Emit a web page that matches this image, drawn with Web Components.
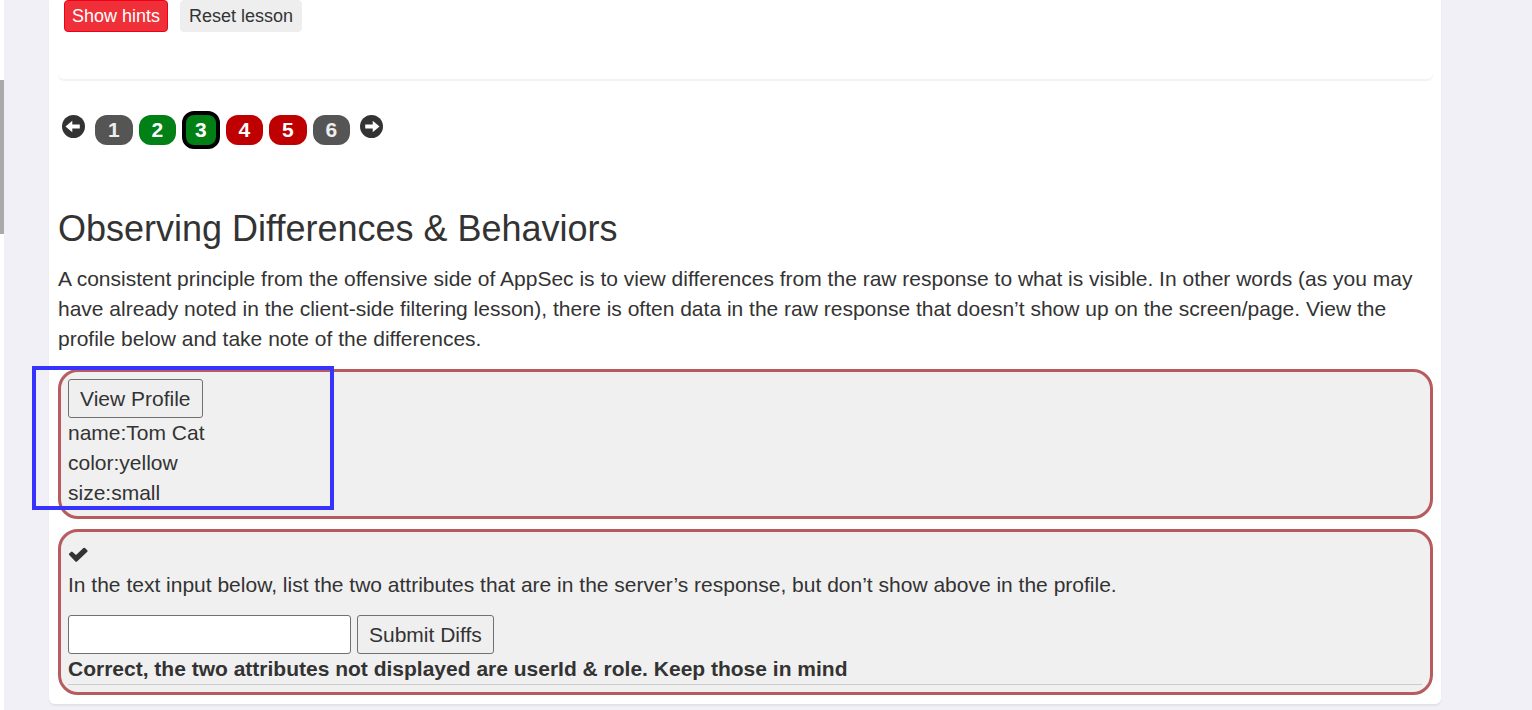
<!DOCTYPE html>
<html lang="en">
<head>
<meta charset="utf-8">
<title>Observing Differences &amp; Behaviors</title>
<style>
  body { margin: 0; background: #f1f0f7; color: #333; font: 21px/30px "Liberation Sans", Arial, sans-serif; }
</style>
</head>
<body>
<lesson-app></lesson-app>

<template id="app">
  <style>
    :host { display: flex; align-items: flex-start; min-height: 100vh; }
    .rail { flex: 0 0 4px; align-self: stretch; background: #fff; padding-top: 80px; box-sizing: border-box; }
    .thumb { height: 154px; background: #aaa; }
    main { flex: 1; min-width: 0; box-sizing: border-box; margin: 0 91px 0 45px; padding: 0 8px 9px 9px; background: #fff; border-radius: 0 0 6px 6px; box-shadow: 0 2px 2px rgba(0,0,0,.06); }
    lesson-pager { margin: 32px 0 60px 4px; }
    h1 { margin: 0 0 15px; font-size: 36px; line-height: 40px; font-weight: 400; }
    p { margin: 0 0 15px; }
    attack-box + attack-box { margin-top: 10px; }
    .lines { margin: 0; }
    .status { display: flex; align-items: center; height: 31px; }
    .status svg { display: block; width: 20px; height: 15px; }
    form { display: flex; gap: 6px; }
    input { box-sizing: border-box; width: 283px; height: 39px; padding: 0 8px; border: 1px solid #707070; border-radius: 3px; background: #fff; font: inherit; color: inherit; }
    .feedback { font-weight: 700; border-bottom: 1px solid #ccc; margin-right: 1px; }
  </style>
  <div class="rail"><div class="thumb"></div></div>
  <main>
    <lesson-toolbar></lesson-toolbar>
    <lesson-pager></lesson-pager>
    <h1>Observing Differences &amp; Behaviors</h1>
    <p>A consistent principle from the offensive side of AppSec is to view differences from the raw response to what is visible. In other words (as you may have already noted in the client-side filtering lesson), there is often data in the raw response that doesn’t show up on the screen/page. View the profile below and take note of the differences.</p>
    <attack-box marked>
      <form-button>View Profile</form-button>
      <div class="lines">name:Tom Cat<br>color:yellow<br>size:small</div>
    </attack-box>
    <attack-box>
      <div class="status"><svg viewBox="0 0 20 15" role="img" aria-label="Solved"><path d="M1.2 8Q.6 7.3 1.2 6.6L3 4.9Q3.8 4.2 4.6 4.9L8 8 15.4 1.1Q16.2.4 17 1.1L19.3 3.3Q20 4 19.3 4.8L9 14.4Q8.2 15 7.4 14.4Z" fill="#333"/></svg></div>
      <p><label for="diffs">In the text input below, list the two attributes that are in the server’s response, but don’t show above in the profile.</label></p>
      <form onsubmit="return false"><input id="diffs" type="text"><form-button>Submit Diffs</form-button></form>
      <div class="feedback">Correct, the two attributes not displayed are userId &amp; role. Keep those in mind</div>
    </attack-box>
  </main>
</template>

<template id="toolbar">
  <style>
    :host { display: flex; gap: 12px; align-items: flex-start; height: 79px; padding-left: 6px; border-radius: 0 0 6px 6px; box-shadow: 0 2px 1px rgba(0,0,0,.05); }
    button { height: 32px; padding: 0 8px; border: 1px solid #eee; border-radius: 4px; background: #eee; color: #333; font: 18px/24px "Liberation Sans", Arial, sans-serif; }
    .hint { padding: 0 7px; background: #ef3038; border-color: #ef0018; color: #fff; }
  </style>
  <button type="button" class="hint">Show hints</button>
  <button type="button">Reset lesson</button>
</template>

<template id="pager">
  <style>
    :host { display: flex; align-items: flex-start; gap: 10px; }
    .arrow { display: block; flex: none; width: 23px; margin-top: 4px; }
    svg { display: block; width: 23px; height: 23px; }
    .pages { display: grid; grid-template-columns: repeat(6, 1fr); gap: 6px; align-items: center; width: 255px; height: 38px; }
    .pages a { display: block; box-sizing: border-box; height: 30px; line-height: 30px; border-radius: 12px; background: #555; color: #eee; font-weight: 700; text-align: center; text-decoration: none; }
    .pages .ok { background: #008015; color: #fff; }
    .pages .bad { background: #bf0000; color: #fff; }
    .pages .current { height: 38px; border: 4px solid #000; }
  </style>
  <a class="arrow" href="#2" aria-label="Previous page"><svg viewBox="0 0 23 23"><circle cx="11.5" cy="11.5" r="11.5" fill="#333"/><path d="M3.5 11.5 10.3 5.8V9.5H17.8V13.5H10.3V17.2Z" fill="#fff"/></svg></a>
  <nav class="pages" aria-label="Lesson pages">
    <a href="#1">1</a><a href="#2" class="ok">2</a><a href="#3" class="ok current" aria-current="page">3</a><a href="#4" class="bad">4</a><a href="#5" class="bad">5</a><a href="#6">6</a>
  </nav>
  <a class="arrow" href="#4" aria-label="Next page"><svg viewBox="0 0 23 23"><circle cx="11.5" cy="11.5" r="11.5" fill="#333"/><path d="M19.5 11.5 12.7 5.8V9.5H5.2V13.5H12.7V17.2Z" fill="#fff"/></svg></a>
</template>

<template id="box">
  <style>
    :host { display: block; position: relative; box-sizing: border-box; padding: 7px; border: 3px solid #b75b5f; border-radius: 20px; background: #f0f0f0; }
    :host([marked]) { padding-bottom: 8px; }
    .mark { display: none; }
    :host([marked]) .mark { display: block; position: absolute; left: -29px; top: -6px; box-sizing: border-box; width: 302px; height: 144px; border: 4px solid #3633ff; pointer-events: none; }
  </style>
  <slot></slot>
  <div class="mark"></div>
</template>

<template id="button">
  <style>
    :host { display: block; width: max-content; }
    button { display: block; height: 39px; padding: 0 11px; border: 1px solid #707070; border-radius: 3px; background: #efefef; color: #333; font: inherit; }
  </style>
  <button type="button"><slot></slot></button>
</template>

<script>
  const register = (name, templateId) => customElements.define(name, class extends HTMLElement {
    constructor() {
      super();
      this.attachShadow({ mode: "open" }).append(document.getElementById(templateId).content.cloneNode(true));
    }
  });
  register("form-button", "button");
  register("attack-box", "box");
  register("lesson-toolbar", "toolbar");
  register("lesson-pager", "pager");
  register("lesson-app", "app");
</script>
</body>
</html>
